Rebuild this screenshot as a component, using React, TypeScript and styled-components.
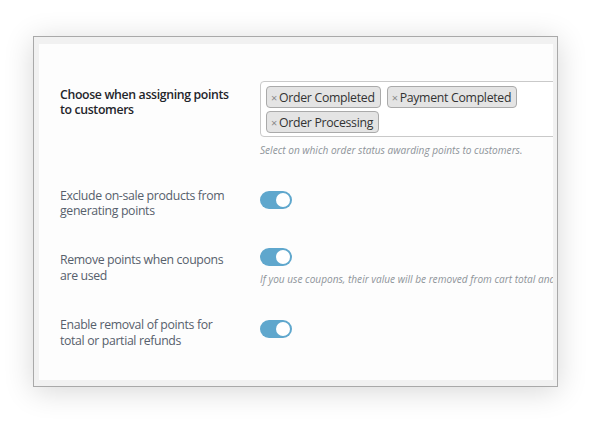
import React from "react";
import styled, { createGlobalStyle } from "styled-components";

const Global = createGlobalStyle`
  html, body { margin: 0; padding: 0; background: #ffffff; }
  body { width: 600px; height: 423px; overflow: hidden; font-family: "Open Sans", "Noto Sans", sans-serif; }
`;

const Stage = styled.div`
  width: 600px;
  height: 423px;
  padding: 36px 0 0 33px;
  box-sizing: border-box;
`;

const Frame = styled.div`
  width: 525px;
  height: 351px;
  box-sizing: border-box;
  border: 1px solid #a9a9a9;
  background: #f1f1f1;
  box-shadow: 0 4px 28px rgba(0, 0, 0, 0.16);
  padding: 7px 4px 6px 5px;
  display: flex;
`;

const Panel = styled.div`
  flex: 1;
  background: #fdfdfd;
  overflow: hidden;
  padding: 37px 0 0 21px;
  display: flex;
  flex-direction: column;
`;

const Row = styled.div<{ $mt: number }>`
  display: grid;
  grid-template-columns: 200px 1fr;
  margin-top: ${(p) => p.$mt}px;
  align-items: start;
`;

const Label = styled.div<{ $strong?: boolean; $pt: number }>`
  font-size: 12.3px;
  line-height: 15.2px;
  letter-spacing: -0.35px;
  font-weight: ${(p) => (p.$strong ? 600 : 400)};
  color: ${(p) => (p.$strong ? "#1f252b" : "#57606c")};
  padding-top: ${(p) => p.$pt}px;
  width: 175px;
`;

const Field = styled.div`
  display: flex;
  flex-direction: column;
  min-width: 0;
  white-space: nowrap;
`;

const SelectBox = styled.div`
  width: 330px;
  box-sizing: border-box;
  border: 1px solid #c9c9c9;
  border-radius: 4px;
  background: #ffffff;
  padding: 4px 0 3px 5px;
  display: flex;
  flex-wrap: wrap;
  gap: 3px 6px;
`;

const Tag = styled.span`
  display: inline-flex;
  align-items: center;
  height: 22px;
  box-sizing: border-box;
  padding: 0 5px 0 4px;
  background: #e4e4e4;
  border: 1px solid #aaaaaa;
  border-radius: 4px;
  font-size: 12.3px;
  letter-spacing: -0.3px;
  color: #333333;
`;

const Remove = styled.span`
  color: #8a8a8a;
  font-size: 11px;
  margin-right: 2px;
`;

const Desc = styled.div<{ $mt: number }>`
  margin-top: ${(p) => p.$mt}px;
  font-size: 10.1px;
  font-style: italic;
  color: #8e949a;
`;

const Toggle = styled.div<{ $mt: number }>`
  margin-top: ${(p) => p.$mt}px;
  width: 32px;
  height: 18px;
  border-radius: 9px;
  background: #5fa7cd;
  box-sizing: border-box;
  padding: 2px;
  display: flex;
  justify-content: flex-end;
`;

const Knob = styled.div`
  width: 14px;
  height: 14px;
  border-radius: 50%;
  background: #ffffff;
`;

export default function App() {
  return (
    <>
      <Global />
      <Stage>
        <Frame>
          <Panel>
            <Row $mt={0}>
              <Label $strong $pt={6}>
                Choose when assigning points to customers
              </Label>
              <Field>
                <SelectBox>
                  <Tag>
                    <Remove>×</Remove>Order Completed
                  </Tag>
                  <Tag>
                    <Remove>×</Remove>Payment Completed
                  </Tag>
                  <Tag>
                    <Remove>×</Remove>Order Processing
                  </Tag>
                </SelectBox>
                <Desc $mt={6}>Select on which order status awarding points to customers.</Desc>
              </Field>
            </Row>
            <Row $mt={31}>
              <Label $pt={0}>Exclude on-sale products from generating points</Label>
              <Field>
                <Toggle $mt={3}>
                  <Knob />
                </Toggle>
              </Field>
            </Row>
            <Row $mt={30}>
              <Label $pt={4}>Remove points when coupons are used</Label>
              <Field>
                <Toggle $mt={0}>
                  <Knob />
                </Toggle>
                <Desc $mt={6}>If you use coupons, their value will be removed from cart total and points</Desc>
              </Field>
            </Row>
            <Row $mt={31}>
              <Label $pt={0}>Enable removal of points for total or partial refunds</Label>
              <Field>
                <Toggle $mt={3}>
                  <Knob />
                </Toggle>
              </Field>
            </Row>
          </Panel>
        </Frame>
      </Stage>
    </>
  );
}
